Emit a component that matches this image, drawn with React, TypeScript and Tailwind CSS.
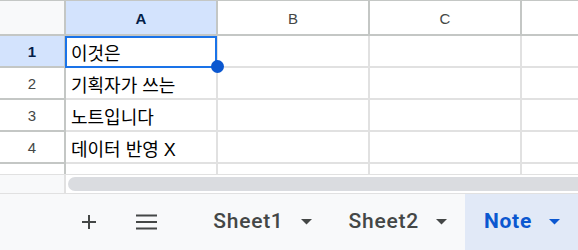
import React from "react";

const cols = ["A", "B", "C", ""];
const rows = [
  { n: 1, text: "이것은" },
  { n: 2, text: "기획자가 쓰는" },
  { n: 3, text: "노트입니다" },
  { n: 4, text: "데이터 반영 X" },
  { n: 5, text: "" },
];

const Caret = ({ color }: { color: string }) => (
  <svg width="11" height="6" viewBox="0 0 11 6">
    <path d="M0 0h11L5.5 5.5z" fill={color} />
  </svg>
);

const SheetTab = ({ name, active }: { name: string; active?: boolean }) => (
  <div
    className={
      "h-full flex items-center gap-[17px] pl-[19px] pr-[18px] " +
      (active ? "bg-[#e1e9f7]" : "")
    }
  >
    <span
      className={
        "text-[21px] tracking-[0.75px] " +
        (active ? "font-bold text-[#0b57d0]" : "font-medium text-[#444746]")
      }
      style={{ fontFamily: "Roboto, 'Liberation Sans', sans-serif" }}
    >
      {name}
    </span>
    <Caret color={active ? "#0b57d0" : "#444746"} />
  </div>
);

export default function App() {
  return (
    <div
      className="w-[578px] h-[250px] overflow-hidden flex flex-col bg-white"
      style={{ fontFamily: "'Liberation Sans', 'Noto Sans CJK KR', sans-serif" }}
    >
      {/* grid */}
      <div className="h-[174px] overflow-hidden border-t border-[#c4c7c5]">
        {/* column headers */}
        <div className="flex h-[35px] border-b-2 border-[#c4c7c5]">
          <div className="w-[66px] shrink-0 bg-[#f8f9fa] border-r-2 border-[#c4c7c5]" />
          {cols.map((c, i) => (
            <div
              key={i}
              className={
                "w-[152px] shrink-0 flex items-center justify-center pt-[3px] border-r-2 border-[#c4c7c5] text-[15px] " +
                (c === "A" ? "bg-[#d3e3fd] font-bold text-[#041e49]" : "text-[#444746]")
              }
            >
              {c}
            </div>
          ))}
        </div>
        {rows.map((r) => (
          <div key={r.n} className="flex h-[32px]">
            <div
              className={
                "w-[66px] shrink-0 flex items-center justify-center pt-[3px] border-r-2 border-b-2 border-[#c4c7c5] text-[15px] " +
                (r.n === 1 ? "bg-[#d3e3fd] font-bold text-[#041e49]" : "text-[#444746]")
              }
            >
              {r.n}
            </div>
            {cols.map((c, i) => (
              <div
                key={i}
                className={
                  "w-[152px] shrink-0 border-r-2 border-b-2 border-[#e1e1e1] " +
                  (c === "A" && r.n === 1 ? "relative z-10" : "")
                }
              >
                {c === "A" && (
                  <div className="h-full flex items-center pl-[5px] pt-[7px] text-[18px] text-black whitespace-nowrap">
                    {r.text}
                  </div>
                )}
                {c === "A" && r.n === 1 && (
                  <>
                    <div className="absolute left-[-1px] top-0 w-[152px] h-[32px] border-2 border-[#1a73e8]" />
                    <div className="absolute right-[-8px] bottom-[-7px] w-[13px] h-[13px] rounded-full bg-[#0b57d0]" />
                  </>
                )}
              </div>
            ))}
          </div>
        ))}
      </div>

      {/* horizontal scrollbar */}
      <div className="h-[19px] flex border-t border-[#e1e1e1]">
        <div className="w-[66px] shrink-0 bg-[#f8f9fa] border-r-2 border-[#e1e1e1]" />
        <div className="flex-1 pl-[2px] pt-[2px]">
          <div className="h-[14px] w-[600px] rounded-full bg-[#dadce0]" />
        </div>
      </div>

      {/* sheet tabs */}
      <div className="h-[57px] flex items-center bg-[#f8f9fa] border-t border-[#e1e1e1]">
        <div className="w-[40px] ml-[69px] flex items-center justify-center">
          <svg width="16" height="16" viewBox="0 0 16 16">
            <path d="M8 1v14M1 8h14" stroke="#444746" strokeWidth="2" />
          </svg>
        </div>
        <div className="w-[40px] ml-[19px] flex items-center justify-center">
          <svg width="21" height="16" viewBox="0 0 21 16">
            <path d="M0 1.5h21M0 8h21M0 14.5h21" stroke="#444746" strokeWidth="2" />
          </svg>
        </div>
        <div className="ml-[28px] h-full flex">
          <SheetTab name="Sheet1" />
          <SheetTab name="Sheet2" />
          <SheetTab name="Note" active />
        </div>
      </div>
    </div>
  );
}
